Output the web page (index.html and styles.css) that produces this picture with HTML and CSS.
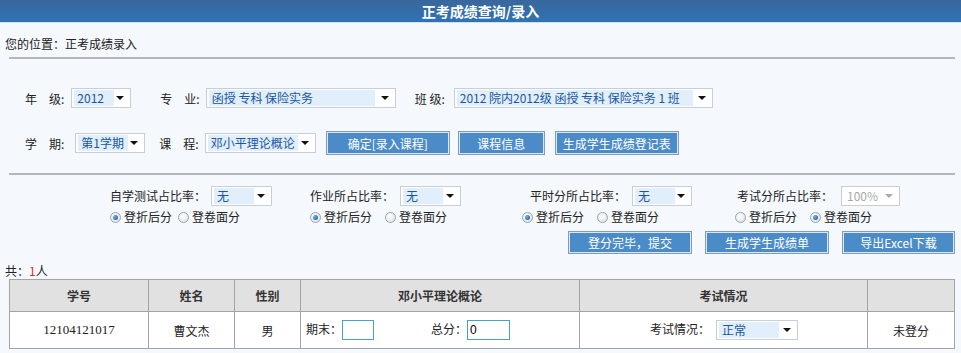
FILE: index.html
```html
<!DOCTYPE html>
<html lang="zh-CN">
<head>
    <meta charset="UTF-8">
    <title>正考成绩查询/录入</title>
    <link rel="stylesheet" href="styles.css">
</head>
<body>
    <div class="titlebar">正考成绩查询/录入</div>
    <div class="crumb">您的位置：正考成绩录入</div>
    <div class="rule"></div>

    <!-- 查询条件 -->
    <div class="row row1">
        <span class="lbl">年　级:</span>
        <span class="sel w60"><span class="val">2012</span><i class="arr"></i></span>
        <span class="lbl l2">专　业:</span>
        <span class="sel w190"><span class="val">函授 专科 保险实务</span><i class="arr"></i></span>
        <span class="lbl l3">班 级:</span>
        <span class="sel w259"><span class="val">2012 院内2012级 函授 专科 保险实务 1 班</span><i class="arr"></i></span>
    </div>
    <div class="row row2">
        <span class="lbl">学　期:</span>
        <span class="sel w70 s-term"><span class="val">第1学期</span><i class="arr"></i></span>
        <span class="lbl l2b">课　程:</span>
        <span class="sel w111"><span class="val">邓小平理论概论</span><i class="arr"></i></span>
        <button class="btn b124 first">确定[录入课程]</button>
        <button class="btn b87">课程信息</button>
        <button class="btn b124">生成学生成绩登记表</button>
    </div>
    <div class="rule rule2"></div>

    <!-- 比率设置 -->
    <div class="ratios">
        <div class="grp g1">
            <div class="line">自学测试占比率：<span class="sel w61"><span class="val">无</span><i class="arr"></i></span></div>
            <div class="radios"><span class="radio on"></span>登折后分<span class="radio sp1"></span>登卷面分</div>
        </div>
        <div class="grp g2">
            <div class="line">作业所占比率：<span class="sel w61"><span class="val">无</span><i class="arr"></i></span></div>
            <div class="radios"><span class="radio on"></span>登折后分<span class="radio sp2"></span>登卷面分</div>
        </div>
        <div class="grp g3">
            <div class="line">平时分所占比率：<span class="sel w60"><span class="val">无</span><i class="arr"></i></span></div>
            <div class="radios shift8"><span class="radio on"></span>登折后分<span class="radio sp2"></span>登卷面分</div>
        </div>
        <div class="grp g4">
            <div class="line">考试分所占比率：<span class="sel w59 off"><span class="val">100%</span><i class="arr"></i></span></div>
            <div class="radios shift2"><span class="radio"></span>登折后分<span class="radio on sp2"></span>登卷面分</div>
        </div>
    </div>
    <div class="actions">
        <button class="btn b124">登分完毕，提交</button>
        <button class="btn b124">生成学生成绩单</button>
        <button class="btn b113">导出Excel下载</button>
    </div>

    <div class="count">共：<span class="num">1</span>人</div>
    <table class="grid">
        <tr>
            <th class="c1">学号</th>
            <th class="c2">姓名</th>
            <th class="c3">性别</th>
            <th class="c4">邓小平理论概论</th>
            <th class="c5">考试情况</th>
            <th class="c6"></th>
        </tr>
        <tr>
            <td class="sno">12104121017</td>
            <td>曹文杰</td>
            <td>男</td>
            <td class="score">期末：<input type="text" class="inp i-final"><span class="tot">总分：</span><input type="text" class="inp i-total" value="0"></td>
            <td class="exam">考试情况：<span class="sel w82"><span class="val">正常</span><i class="arr"></i></span></td>
            <td>未登分</td>
        </tr>
    </table>
</body>
</html>
```

FILE: styles.css
```css
body {
    margin: 0;
    background: #f5f9fd;
    font-family: "Noto Sans CJK SC", "Liberation Sans", sans-serif;
    font-size: 12px;
    color: #222;
    width: 961px;
    height: 353px;
    overflow: hidden;
}
.titlebar {
    height: 22px;
    line-height: 22px;
    text-align: center;
    color: #fff;
    font-size: 14px;
    font-weight: bold;
    background: linear-gradient(#3a679b, #2f73b5);
    border-bottom: 1px solid #cfe0ef;
}
.crumb {
    margin-top: 13px;
    padding-left: 5px;
    height: 16px;
    line-height: 16px;
}
.rule {
    margin: 5px 6px 0 9px;
    height: 2px;
    background: #b4b7bb;
}
.rule2 {
    margin-top: 18px;
}
.row {
    display: flex;
    align-items: center;
    padding-left: 25px;
}
.row1 {
    margin-top: 29px;
    height: 20px;
}
.row2 {
    margin-top: 23px;
    height: 24px;
}
.lbl {
    color: #222;
    margin-right: 7px;
}
.l2 {
    margin-left: 29px;
    margin-right: 6px;
}
.l3 {
    margin-left: 19px;
    margin-right: 9px;
}
.l2b {
    margin-left: 14px;
    margin-right: 6px;
}
.s-term {
    margin-left: 4px;
}

/* 下拉框 */
.sel {
    display: inline-flex;
    flex: none;
    align-items: center;
    box-sizing: border-box;
    height: 20px;
    border: 1px solid #c7ced6;
    background: #fff;
    position: relative;
    vertical-align: middle;
}
.sel .val {
    margin-left: 2px;
    height: 16px;
    line-height: 16px;
    padding-left: 3px;
    background: #e1eefb;
    color: #1a56a0;
    flex: none;
    white-space: nowrap;
    overflow: hidden;
    box-sizing: border-box;
}
.sel .arr {
    position: absolute;
    right: 6px;
    top: 7px;
    border-left: 4px solid transparent;
    border-right: 4px solid transparent;
    border-top: 4px solid #111;
}
.sel.off {
    border-color: #ccc;
}
.sel.off .val {
    background: #fff;
    color: #a9a9a9;
}
.sel.off .arr {
    border-top-color: #aaa;
}
.w60 { width: 60px; }
.w60 .val { width: 40px; }
.w59 { width: 59px; }
.w59 .val { width: 40px; }
.w61 { width: 61px; }
.w61 .val { width: 40px; }
.w70 { width: 70px; }
.w70 .val { width: 50px; }
.w111 { width: 111px; }
.w111 .val { width: 90px; }
.w190 { width: 190px; }
.w190 .val { width: 166px; }
.w259 { width: 259px; }
.w259 .val { width: 236px; }
.w82 { width: 82px; }
.w82 .val { width: 60px; }

/* 按钮 */
.btn {
    box-sizing: border-box;
    flex: none;
    height: 24px;
    padding: 0;
    font-family: inherit;
    font-size: 12px;
    color: #fff;
    background: #4b8cc8;
    border: 1px solid #7f9db9;
    box-shadow: inset 0 0 0 1px #dbe8f4;
    cursor: pointer;
}
.b124 { width: 124px; }
.b87 { width: 87px; }
.b113 { width: 113px; }
.row2 .first { margin-left: 10px; }
.row2 .b87 { margin-left: 8px; }
.row2 .b87 + .b124 { margin-left: 10px; }

/* 比率 */
.ratios {
    display: flex;
    margin-top: 11px;
    padding-left: 110px;
}
.grp {
    flex: none;
}
.g1 { width: 200px; }
.g2 { width: 220px; }
.g3 { width: 207px; }
.grp .line {
    height: 20px;
    line-height: 20px;
    display: flex;
    align-items: center;
}
.g1 .line .sel { margin-left: 5px; }
.g2 .line .sel { margin-left: 6px; }
.g3 .line .sel { margin-left: 6px; }
.g4 .line .sel { margin-left: 8px; }
.radios {
    height: 16px;
    line-height: 16px;
    margin-top: 3px;
    display: flex;
    align-items: center;
    white-space: nowrap;
}
.shift8 { margin-left: -8px; }
.shift2 { margin-left: -2px; }
.radio {
    display: inline-block;
    box-sizing: border-box;
    width: 11px;
    height: 11px;
    border-radius: 50%;
    border: 1px solid #97a3ae;
    background: radial-gradient(circle at 40% 35%, #ffffff, #d9dee3);
    margin-right: 3px;
    position: relative;
}
.radio.on::after {
    content: "";
    position: absolute;
    left: 2px;
    top: 2px;
    width: 5px;
    height: 5px;
    border-radius: 50%;
    background: radial-gradient(circle at 35% 35%, #6fb3ea, #14508f);
}
.sp1 { margin-left: 6px; }
.sp2 { margin-left: 13px; }
.actions {
    display: flex;
    justify-content: flex-end;
    gap: 13px;
    padding-right: 6px;
    margin-top: 6px;
}
.actions .btn {
    height: 23px;
}

/* 列表 */
.count {
    margin-top: 9px;
    padding-left: 5px;
    height: 16px;
    line-height: 16px;
}
.num {
    color: #c33;
}
.grid {
    margin: 0 0 0 9px;
    width: 946px;
    border-collapse: collapse;
    background: #fff;
}
.grid th,
.grid td {
    border: 1px solid #a4a4a4;
    text-align: center;
    padding: 0;
}
.grid th {
    height: 31px;
    background: #e1e1e1;
    font-weight: bold;
    color: #333;
}
.grid td {
    height: 36px;
}
.c1 { width: 138px; }
.c2 { width: 85px; }
.c3 { width: 65px; }
.c4 { width: 278px; }
.c5 { width: 287px; }
.sno {
    font-family: "Liberation Serif", serif;
    font-size: 13px;
}
.grid td.score {
    text-align: left;
    padding-left: 5px;
}
.inp {
    box-sizing: border-box;
    height: 20px;
    border: 1px solid #4aa0c8;
    background: #fff;
    vertical-align: middle;
    font-family: "Liberation Sans", sans-serif;
    font-size: 12px;
    padding: 0 2px;
    margin: 0;
}
.i-final { width: 32px; }
.i-total { width: 43px; }
.tot {
    margin-left: 57px;
}
.grid td.exam {
    text-align: left;
    padding-left: 70px;
}
.exam .sel {
    margin-left: 6px;
}
```
